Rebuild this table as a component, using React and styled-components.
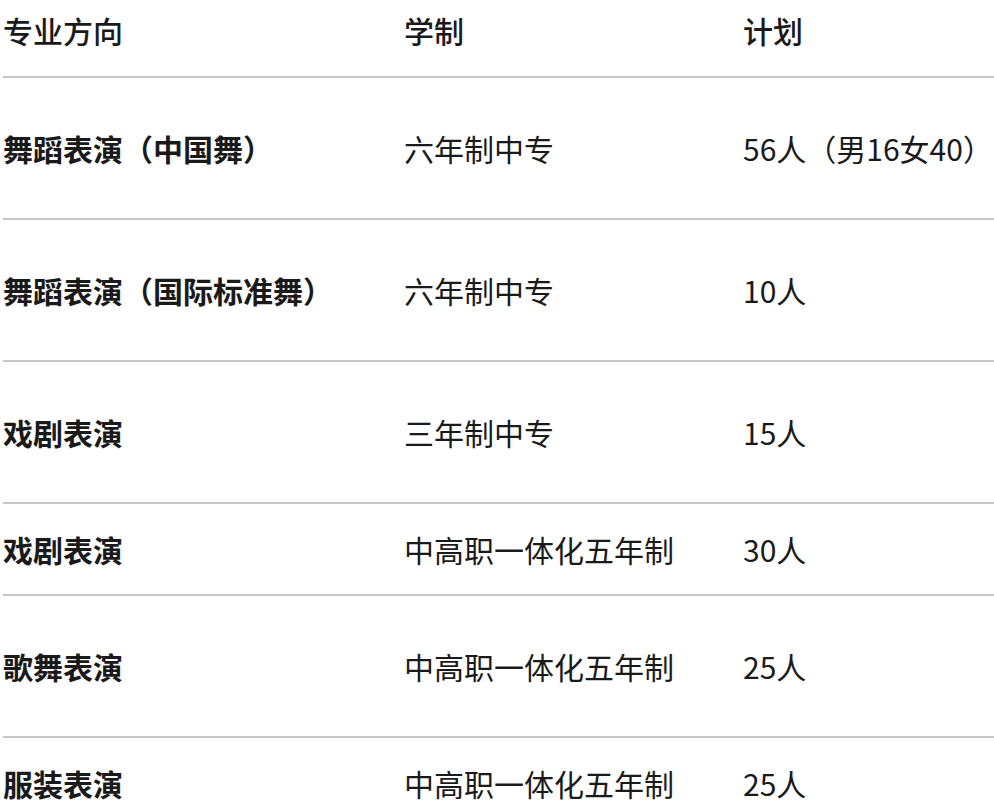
import React from "react";
import styled, { createGlobalStyle } from "styled-components";

const Global = createGlobalStyle`
  html, body { margin: 0; padding: 0; background: #ffffff; }
  body {
    font-family: "Noto Sans CJK SC", "Noto Sans", sans-serif;
    color: #1a1a1a;
    overflow: hidden;
  }
`;

const Table = styled.div`
  margin-left: 3px;
  display: flex;
  flex-direction: column;
`;

const Row = styled.div`
  display: grid;
  grid-template-columns: 401px 339px 1fr;
  align-items: center;
  height: ${(p) => p.$h}px;
  border-bottom: 2px solid #c8c8c8;
`;

const Cell = styled.div`
  font-size: 30px;
  line-height: 36px;
  white-space: nowrap;
  font-weight: ${(p) => p.$weight || 400};
  color: #1a1a1a;
`;

const HeaderRow = styled(Row)`
  align-items: start;
  padding-top: 12px;
  box-sizing: border-box;
`;

const rows = [
  { name: "舞蹈表演（中国舞）", system: "六年制中专", plan: "56人（男16女40）", h: 140 },
  { name: "舞蹈表演（国际标准舞）", system: "六年制中专", plan: "10人", h: 140 },
  { name: "戏剧表演", system: "三年制中专", plan: "15人", h: 140 },
  { name: "戏剧表演", system: "中高职一体化五年制", plan: "30人", h: 90 },
  { name: "歌舞表演", system: "中高职一体化五年制", plan: "25人", h: 140 },
  { name: "服装表演", system: "中高职一体化五年制", plan: "25人", h: 90 },
];

export default function App() {
  return (
    <>
      <Global />
      <Table>
        <HeaderRow $h={78}>
          <Cell $weight={500}>专业方向</Cell>
          <Cell $weight={500}>学制</Cell>
          <Cell $weight={500}>计划</Cell>
        </HeaderRow>
        {rows.map((r, i) => (
          <Row key={i} $h={r.h}>
            <Cell $weight={600}>{r.name}</Cell>
            <Cell>{r.system}</Cell>
            <Cell>{r.plan}</Cell>
          </Row>
        ))}
      </Table>
    </>
  );
}
